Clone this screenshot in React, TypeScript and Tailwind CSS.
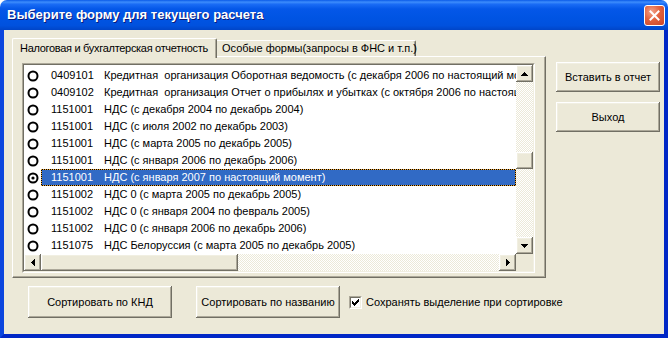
import React from "react";

const rows: [string, string][] = [
  ["0409101", "Кредитная  организация Оборотная ведомость (с декабря 2006 по настоящий момент)"],
  ["0409102", "Кредитная  организация Отчет о прибылях и убытках (с октября 2006 по настоящий момент)"],
  ["1151001", "НДС (с декабря 2004 по декабрь 2004)"],
  ["1151001", "НДС (с июля 2002 по декабрь 2003)"],
  ["1151001", "НДС (с марта 2005 по декабрь 2005)"],
  ["1151001", "НДС (с января 2006 по декабрь 2006)"],
  ["1151001", "НДС (с января 2007 по настоящий момент)"],
  ["1151002", "НДС 0 (с марта 2005 по декабрь 2005)"],
  ["1151002", "НДС 0 (с января 2004 по февраль 2005)"],
  ["1151002", "НДС 0 (с января 2006 по декабрь 2006)"],
  ["1151075", "НДС Белоруссия (с марта 2005 по декабрь 2005)"],
];

const raised =
  "bg-[#ECE9D8] shadow-[inset_-1px_-1px_0_#716F64,inset_1px_1px_0_#FFFFFF,inset_-2px_-2px_0_#ACA899,inset_2px_2px_0_#F1EFE2]";
const track =
  "bg-[repeating-conic-gradient(#ffffff_0_25%,#ECE9D8_0_50%)] bg-[length:2px_2px]";

function Tri({ dir }: { dir: "up" | "down" | "left" | "right" }) {
  const rects: React.ReactNode[] = [];
  for (let i = 0; i < 4; i++) {
    const len = 1 + i * 2;
    const off = 3 - i;
    if (dir === "up") rects.push(<rect key={i} x={off} y={i} width={len} height={1} />);
    if (dir === "down") rects.push(<rect key={i} x={off} y={3 - i} width={len} height={1} />);
    if (dir === "left") rects.push(<rect key={i} x={i} y={off} width={1} height={len} />);
    if (dir === "right") rects.push(<rect key={i} x={3 - i} y={off} width={1} height={len} />);
  }
  const w = dir === "up" || dir === "down" ? 7 : 4;
  const h = dir === "up" || dir === "down" ? 4 : 7;
  return (
    <svg width={w} height={h} viewBox={`0 0 ${w} ${h}`} shapeRendering="crispEdges" fill="#000">
      {rects}
    </svg>
  );
}

function Radio({ on }: { on?: boolean }) {
  return (
    <svg width="12" height="12" viewBox="0 0 12 12" className="shrink-0">
      <circle cx="6" cy="6" r="4.5" fill="#fff" stroke="#000" strokeWidth="2" />
      {on && <circle cx="6" cy="6" r="1.6" fill="#000" />}
    </svg>
  );
}

function Btn({ children, className }: { children: React.ReactNode; className: string }) {
  return (
    <div className={`${raised} flex items-center justify-center text-[11px] text-black ${className}`}>
      {children}
    </div>
  );
}

export default function App() {
  return (
    <div className="w-[672px] h-[339px] bg-white overflow-hidden font-['Liberation_Sans',Arial,sans-serif]">
      <div className="w-[668px] h-[338px] flex flex-col rounded-t-[7px] overflow-hidden">
        {/* Title bar */}
        <div className="h-[30px] shrink-0 flex items-center justify-between pl-[7px] pr-[3px] bg-[linear-gradient(to_bottom,#0A5AE8_0%,#3D8DFC_7%,#1A6CF5_14%,#0457E8_30%,#0054E3_60%,#0051DE_85%,#0045C8_100%)]">
          <span className="text-white font-bold text-[13px] [text-shadow:1px_1px_0_#0A1A7A]">
            Выберите форму для текущего расчета
          </span>
          <div className="w-[21px] h-[21px] rounded-[3px] border border-white bg-[radial-gradient(circle_at_35%_30%,#F3A38A_0%,#E2623E_45%,#C9452A_100%)] flex items-center justify-center">
            <svg width="11" height="11" viewBox="0 0 11 11">
              <path d="M1.5 1.5 L9.5 9.5 M9.5 1.5 L1.5 9.5" stroke="#fff" strokeWidth="2" strokeLinecap="square" />
            </svg>
          </div>
        </div>

        {/* Client */}
        <div className="flex-1 flex flex-col bg-[#ECE9D8] border-l-4 border-r-4 border-b-4 border-l-[#0B46DE] border-r-[#0027C6] border-b-[#0027C6]">
          <div className="flex pl-[8px] pt-[8px]">
            <div className="w-[534px] flex flex-col">
              {/* Tabs */}
              <div className="flex h-[18px] relative z-10 text-[11px] text-black">
                <div className="h-[20px] w-[205px] bg-[#ECE9D8] border-l border-t border-l-white border-t-white border-r border-r-[#716F64] rounded-tl-[2px] rounded-tr-[2px] shadow-[inset_-1px_0_0_#ACA899] pl-[7px] pt-[3px] leading-[13px] whitespace-nowrap tracking-[-0.3px] overflow-hidden">
                  Налоговая и бухгалтерская отчетность
                </div>
                <div className="mt-[2px] h-[16px] w-[199px] bg-[#ECE9D8] border-t border-t-white border-r border-r-[#716F64] rounded-tr-[2px] shadow-[inset_-1px_0_0_#ACA899] pl-[5px] pt-[1px] leading-[13px] whitespace-nowrap">
                  Особые формы(запросы в ФНС и т.п.)
                </div>
              </div>
              {/* Panel */}
              <div className="h-[222px] border border-l-white border-t-white border-r-[#716F64] border-b-[#716F64] shadow-[inset_-1px_-1px_0_#ACA899] pl-[9px] pt-[6px]">
                {/* Listbox */}
                <div className="w-[513px] h-[210px] border border-l-[#ACA899] border-t-[#ACA899] border-r-white border-b-white">
                  <div className="w-full h-full border border-l-[#716F64] border-t-[#716F64] border-r-[#F1EFE2] border-b-[#F1EFE2] flex flex-col bg-white">
                    <div className="flex h-[189px]">
                      <div className="w-[492px] h-[189px] overflow-hidden pt-[2px] text-[11px]">
                        {rows.map(([code, desc], i) => {
                          const sel = i === 6;
                          return (
                            <div key={i} className="h-[17px] flex items-center">
                              <div className="pl-[3px] w-[17px] flex items-center shrink-0">
                                <Radio on={sel} />
                              </div>
                              <div
                                className={`flex-1 min-w-0 h-[17px] flex items-center whitespace-pre overflow-hidden ${
                                  sel
                                    ? "bg-[#316AC5] text-white border border-black outline-1 outline-dotted outline-[#F0A838] -outline-offset-1 pl-[9px]"
                                    : "text-black pl-[10px]"
                                }`}
                              >
                                <span className="w-[53px] shrink-0">{code}</span>
                                <span className="whitespace-pre">{desc}</span>
                              </div>
                            </div>
                          );
                        })}
                      </div>
                      {/* Vertical scrollbar */}
                      <div className={`w-[17px] h-[189px] flex flex-col ${track}`}>
                        <div className={`${raised} h-[17px] flex items-center justify-center`}>
                          <Tri dir="up" />
                        </div>
                        <div className="h-[70px]" />
                        <div className={`${raised} h-[17px]`} />
                        <div className="flex-1" />
                        <div className={`${raised} h-[17px] flex items-center justify-center`}>
                          <Tri dir="down" />
                        </div>
                      </div>
                    </div>
                    <div className="flex h-[17px]">
                      <div className={`w-[492px] h-[17px] flex ${track}`}>
                        <div className={`${raised} w-[17px] flex items-center justify-center`}>
                          <Tri dir="left" />
                        </div>
                        <div className={`${raised} w-[197px]`} />
                        <div className="flex-1" />
                        <div className={`${raised} w-[17px] flex items-center justify-center`}>
                          <Tri dir="right" />
                        </div>
                      </div>
                      <div className="w-[17px] h-[17px] bg-[#ECE9D8]" />
                    </div>
                  </div>
                </div>
              </div>
            </div>
            {/* Right buttons */}
            <div className="ml-[10px] pt-[24px] flex flex-col gap-[10px]">
              <Btn className="w-[104px] h-[30px]">Вставить в отчет</Btn>
              <Btn className="w-[104px] h-[30px]">Выход</Btn>
            </div>
          </div>

          {/* Bottom row */}
          <div className="flex items-center pl-[24px] mt-[8px]">
            <Btn className="w-[144px] h-[32px]">Сортировать по КНД</Btn>
            <Btn className="w-[144px] h-[32px] ml-[24px]">Сортировать по названию</Btn>
            <div className="ml-[9px] flex items-center">
              <div className="w-[13px] h-[13px] border border-l-[#ACA899] border-t-[#ACA899] border-r-white border-b-white">
                <div className="w-full h-full border border-l-[#716F64] border-t-[#716F64] border-r-[#F1EFE2] border-b-[#F1EFE2] bg-white flex items-center justify-center">
                  <svg width="7" height="7" viewBox="0 0 7 7" shapeRendering="crispEdges" fill="#000">
                    <rect x="0" y="2" width="1" height="3" />
                    <rect x="1" y="3" width="1" height="3" />
                    <rect x="2" y="4" width="1" height="3" />
                    <rect x="3" y="3" width="1" height="3" />
                    <rect x="4" y="2" width="1" height="3" />
                    <rect x="5" y="1" width="1" height="3" />
                    <rect x="6" y="0" width="1" height="3" />
                  </svg>
                </div>
              </div>
              <span className="ml-[4px] text-[11px] text-black whitespace-nowrap">
                Сохранять выделение при сортировке
              </span>
            </div>
          </div>
        </div>
      </div>
    </div>
  );
}
